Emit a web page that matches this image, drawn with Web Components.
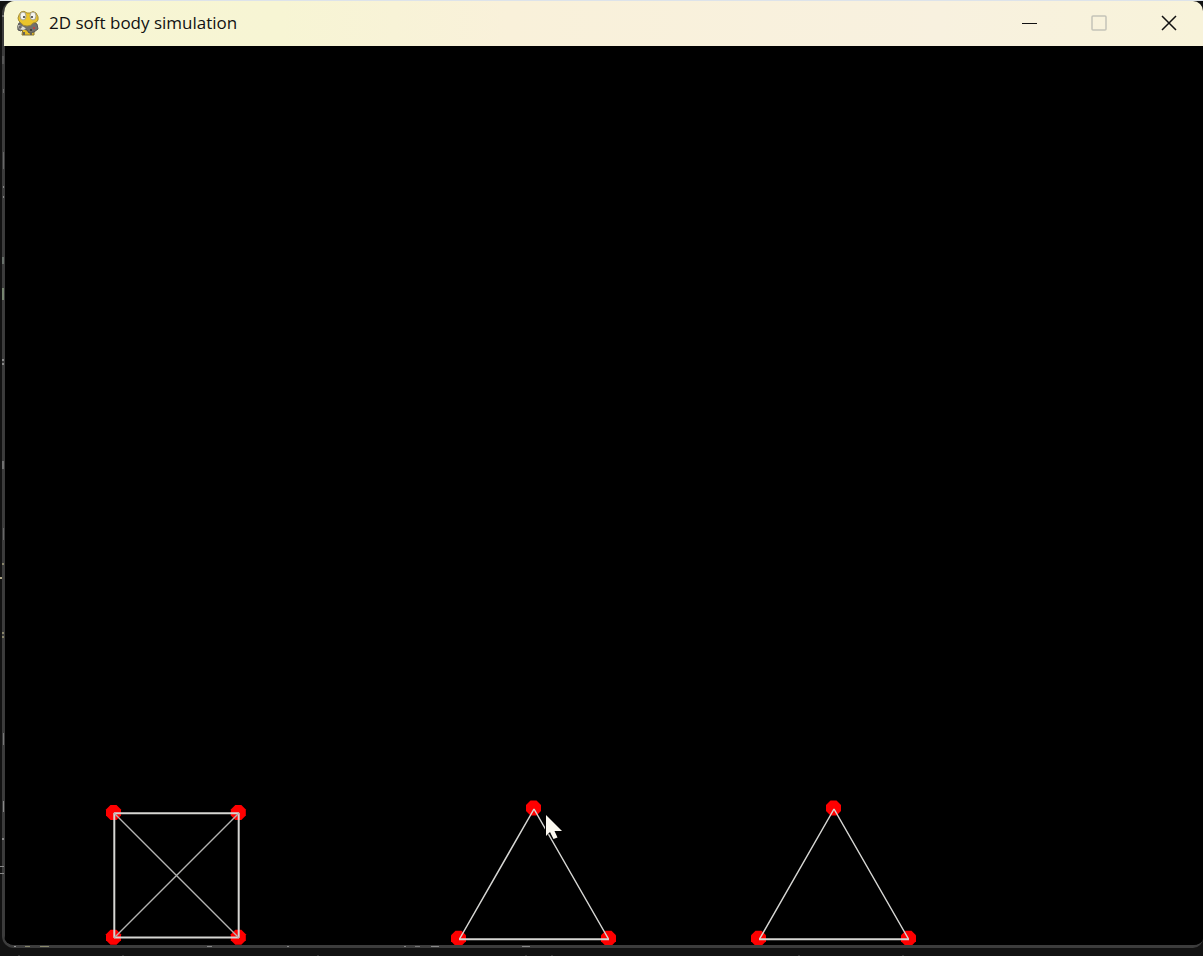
<!DOCTYPE html>
<html lang="en">
<head>
<meta charset="utf-8">
<title>2D soft body simulation</title>
<style>
html, body { margin: 0; height: 100%; background: #121212; }
body { overflow: hidden; font-family: "Open Sans", "Noto Sans", sans-serif; }
</style>
</head>
<body>
<desktop-backdrop>
  <app-window>
    <title-bar slot="bar">2D soft body simulation</title-bar>
    <sim-canvas></sim-canvas>
  </app-window>
</desktop-backdrop>
<script>
const define = (name, html) => customElements.define(name, class extends HTMLElement {
  constructor() {
    super();
    this.attachShadow({ mode: "open" }).innerHTML = html;
  }
});

// Traces of the editor behind the window: x, y, width, height, colour
const specks = [
  [2,15,2,2,"#777"],[2,56,2,8,"#555"],[3,89,1,4,"#666"],[3,152,1,17,"#666"],[3,186,1,2,"#888"],[3,196,1,2,"#888"],
  [2,257,2,7,"#68706a"],[2,288,2,12,"#76846f"],[2,359,2,2,"#888"],[2,363,2,2,"#888"],
  [2,461,2,8,"#707070"],[3,528,1,12,"#666"],[2,563,2,2,"#88846a"],[0,577,2,2,"#b0a888"],
  [2,632,2,2,"#88846a"],[2,636,2,2,"#88846a"],[3,733,1,12,"#777"],[3,801,1,11,"#888"],
  [2,838,2,2,"#888"],[0,866,4,1,"#888"],[0,873,4,1,"#888"],
  [14,946,2,1,"#999"],[25,946,5,1,"#88886c"],[40,946,9,1,"#88886c"],[207,946,5,1,"#888"],
  [287,946,2,1,"#888"],[404,946,2,1,"#888"],[415,946,5,1,"#777"],[431,946,8,1,"#888"],[522,946,8,1,"#888"],
  [18,955,2,1,"#333"],[122,955,2,1,"#333"],[317,955,2,1,"#333"],[525,955,2,1,"#333"],[551,955,2,1,"#333"],
  [798,955,2,1,"#333"],[902,955,2,1,"#333"]
].map(([x, y, w, h, c]) => `<rect x="${x}" y="${y}" width="${w}" height="${h}" fill="${c}"/>`).join("");

define("desktop-backdrop", `
<style>
  :host { display: flex; flex-direction: column; box-sizing: border-box; height: 100vh; position: relative;
    padding: 0 0 8px 2px; border-top: 1px solid #dde3ea; background: #121212; }
  .traces { position: absolute; left: 0; top: -1px; pointer-events: none; }
</style>
<slot></slot>
<svg class="traces" width="100%" height="100vh" aria-hidden="true">${specks}</svg>`);

define("app-window", `
<style>
  :host { display: flex; flex-direction: column; flex: 1; min-height: 0; overflow: hidden; background: #000;
    border: solid #3c3c3c; border-width: 0 0 3px 2px; border-radius: 12px 10px 10px 12px; }
  main { display: flex; flex: 1; min-height: 0; border-left: 1px solid #3a3a3a; }
</style>
<slot name="bar"></slot>
<main><slot></slot></main>`);

define("title-bar", `
<style>
  :host { display: flex; align-items: center; box-sizing: border-box; height: 45px; padding-bottom: 2px;
    color: #111; font-size: 17px; line-height: 24px;
    background: linear-gradient(90deg, #f7f6d3 0%, #f7f5d4 23%, #f9f1da 42%, #f8f1df 78%, #f8f3da 100%); }
  .logo { display: block; margin: 0 10px 0 13px; }
  h1 { flex: 1; margin: 0; font: inherit; font-weight: 400; white-space: nowrap; }
  button { display: grid; place-items: center; align-self: stretch; width: 68px; padding: 0; border: 0; background: none; color: #111; }
  button:disabled { width: 72px; color: #c4c3b8; }
  button svg { display: block; fill: none; stroke: currentColor; }
</style>
<svg class="logo" width="22" height="26" viewBox="0 0 22 26" aria-hidden="true">
  <path d="M6 18h11v7H5z" fill="#e5bd25" stroke="#87722e"/>
  <path d="M2 13Q0 16 1 20l3 1 2-2 4 1 2 3 5-1 4-3-1-5-4-2H5z" fill="#73716b" stroke="#555"/>
  <path d="M1 15l3 1 3 1 2 2-3 1-4-1z" fill="#dddcd5"/>
  <path d="M3 16v3M2 17h3" stroke="#444"/>
  <circle cx="17" cy="18" r="1" fill="#d33a32"/><circle cx="14" cy="20" r="1" fill="#333"/>
  <path d="M4 2Q7 0 10 3l3 0Q16 0 19 3q3 4 2 7-1 3-5 3-2 3-6 3t-6-3Q1 11 1 8q1-4 3-6z" fill="#ebc52c" stroke="#a68d30"/>
  <ellipse cx="6" cy="6" rx="3" ry="4" fill="#f5f5ef" stroke="#a7a38b"/>
  <ellipse cx="16" cy="6" rx="3" ry="4" fill="#f5f5ef" stroke="#a7a38b"/>
  <circle cx="7" cy="7" r="1" fill="#333"/><circle cx="15" cy="7" r="1" fill="#333"/>
  <path d="M7 22v3M14 22v3" stroke="#656257" stroke-width="2"/>
</svg>
<h1><slot></slot></h1>
<button aria-label="Minimize"><svg width="16" height="16"><path d="M1 8.500h15"/></svg></button>
<button aria-label="Maximize" disabled><svg width="16" height="16"><rect x="1" y="1" width="14" height="14" rx="1" stroke-width="1.5"/></svg></button>
<button aria-label="Close"><svg width="16" height="16"><path d="M1 1l14 14M15 1L1 15" stroke-width="1.5"/></svg></button>`);

const mass = (x, y) => `<path transform="translate(${x} ${y})" d="M-3-7.5H3L7.5-3V3L3 7.5H-3L-7.5 3V-3z" fill="#f00" stroke="none"/>`;
const triangle = x => `
  ${mass(x - .5, 808)}${mass(x - 75.5, 938.3)}${mass(x + 74.5, 938.3)}
  <path d="M${x - 74.5} 939L${x} 809L${x + 74.5} 939" stroke-width="1.5"/>
  <path d="M${x - 75} 939.2H${x + 75}" stroke-width="2"/>`;

define("sim-canvas", `
<style>
  :host { display: flex; flex: 1; min-width: 0; min-height: 0; background: #000; }
  svg { display: block; width: 100%; height: 100%; }
</style>
<svg viewBox="5 46 1198 899" preserveAspectRatio="xMinYMax meet" fill="none" stroke-linejoin="bevel" role="img" aria-label="Square and two triangle soft bodies">
  <g>${mass(113.5, 812.5)}${mass(238.3, 812.5)}${mass(113.5, 937.2)}${mass(238.3, 937.2)}</g>
  <g stroke="#d6d6d3">
    <path d="M114.3 813.3H238.7V937.4H114.3z" stroke-width="2"/>
    <path d="M114 813L239 938M239 813L114 938" stroke="#b4b4b2" stroke-width="1.4"/>
    ${triangle(534)}${triangle(834)}
  </g>
  <path d="M545 813V837L550 833L553 840L559 838L556 832H563z" fill="#000"/>
  <path d="M546 815V836L550 832L553.500 839L557.500 837.500L554.500 831H562z" fill="#fbf8f0"/>
</svg>`);
</script>
</body>
</html>
